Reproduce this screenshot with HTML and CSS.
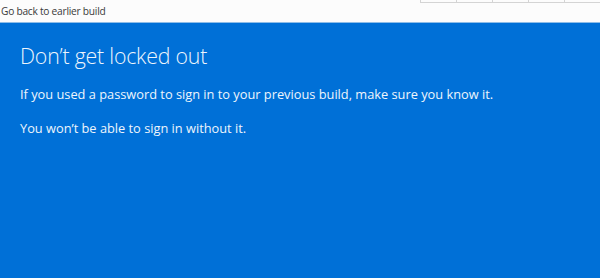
FILE: index.html
```html
<!DOCTYPE html>
<html lang="en">
<head>
    <meta charset="UTF-8">
    <meta name="viewport" content="width=device-width, initial-scale=1.0">
    <title>Go back to earlier build</title>
    <link rel="stylesheet" href="styles.css">
</head>
<body>
    <div class="titlebar">
        <div class="title">Go back to earlier build</div>
        <div class="caption-boxes">
            <span></span><span></span><span></span><span></span><span></span>
        </div>
    </div>
    <div class="panel">
        <h1 class="heading">Don’t get locked out</h1>
        <p>If you used a password to sign in to your previous build, make sure you know it.</p>
        <p>You won’t be able to sign in without it.</p>
    </div>
</body>
</html>
```

FILE: styles.css
```css
body {
    margin: 0;
    padding: 0;
    height: 100vh;
    display: flex;
    flex-direction: column;
    font-family: 'Open Sans', 'Noto Sans', sans-serif;
    background-color: #0070d7;
    overflow: hidden;
}
.titlebar {
    height: 22px;
    background-color: #fcfcfc;
    border-bottom: 1px solid #8fbde8;
    display: flex;
    justify-content: space-between;
}
.title {
    font-size: 10.2px;
    letter-spacing: -0.25px;
    color: #3a3a3a;
    padding: 4px 0 0 1px;
}
.caption-boxes {
    display: flex;
    height: 2px;
    border-bottom: 1px solid #d4d4d4;
    margin-left: auto;
    width: 180px;
}
.caption-boxes span {
    flex: 1;
    border-left: 1px solid #d4d4d4;
}
.panel {
    flex: 1;
    padding: 19px 20px 0 20px;
    color: #eef5fc;
}
.heading {
    font-size: 21.3px;
    line-height: 28px;
    font-weight: 300;
    margin: 0 0 16px 0;
    letter-spacing: -0.2px;
}
.panel p {
    font-size: 12.8px;
    line-height: 17px;
    margin: 0 0 17px 0;
}
```
